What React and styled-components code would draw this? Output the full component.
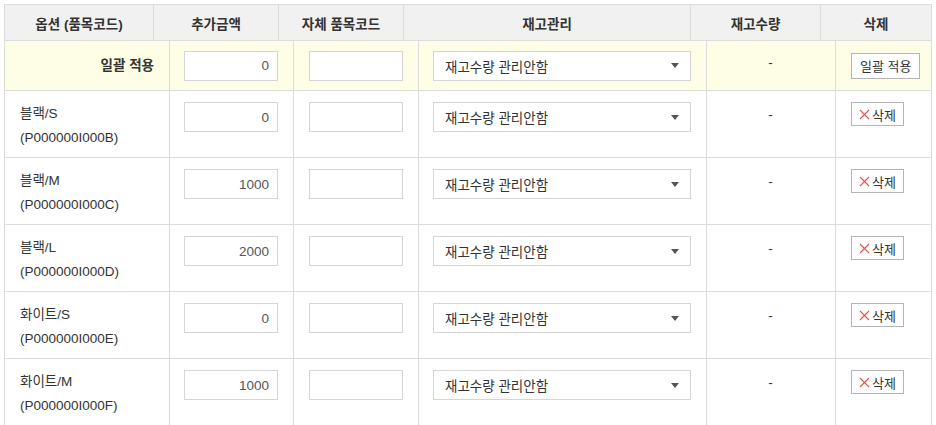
import React from "react";
import styled, { createGlobalStyle } from "styled-components";

const GlobalStyle = createGlobalStyle`
  html, body {
    margin: 0;
    padding: 0;
    background: #fff;
    overflow: hidden;
  }
  body {
    font-family: "Liberation Sans", "Noto Sans CJK KR", sans-serif;
    font-size: 13.5px;
    color: #333;
  }
`;

const headCols = "149px 125px 125px 287px 130px 112px";
const bodyCols = "165px 124px 125px 288px 129px 97px";

const Wrapper = styled.div`
  padding: 4px 0 0 4px;
  width: 928px;
  height: 421px;
  overflow: hidden;
`;

const HeadRow = styled.div`
  display: grid;
  grid-template-columns: ${headCols};
  height: 37px;
  background: #f1f1f1;
  border-top: 1px solid #dcdcdc;
  border-bottom: 1px solid #dcdcdc;
  box-sizing: border-box;
`;

const HeadCell = styled.div`
  display: flex;
  align-items: center;
  justify-content: center;
  border-left: 1px solid #dcdcdc;
  border-right: ${(p) => (p.$last ? "1px solid #dcdcdc" : "none")};
  font-weight: bold;
  color: #333;
`;

const Row = styled.div`
  display: grid;
  grid-template-columns: ${bodyCols};
  height: ${(p) => (p.$bulk ? "50px" : "67px")};
  background: ${(p) => (p.$bulk ? "#fefde6" : "#fff")};
  border-bottom: 1px solid #dcdcdc;
  box-sizing: border-box;
`;

const Cell = styled.div`
  display: flex;
  align-items: ${(p) => (p.$bulk ? "center" : "flex-start")};
  justify-content: ${(p) => p.$justify || "flex-start"};
  padding: ${(p) => (p.$bulk ? "0 15px 0 14px" : "11px 15px 0 14px")};
  border-left: 1px solid #dcdcdc;
  border-right: ${(p) => (p.$last ? "1px solid #dcdcdc" : "none")};
  box-sizing: border-box;
  min-width: 0;
`;

const BulkLabel = styled.div`
  width: 100%;
  text-align: right;
  font-weight: bold;
  color: #333;
  margin-top: -4px;
`;

const OptionLabel = styled.div`
  line-height: 24px;
  padding-left: 1px;
  color: #333;
`;

const TextInput = styled.div`
  width: 94px;
  height: 30px;
  box-sizing: border-box;
  border: 1px solid #d6d6d6;
  background: #fff;
  display: flex;
  align-items: center;
  justify-content: flex-end;
  padding-right: 8px;
  color: #555;
`;

const Select = styled.div`
  width: 100%;
  height: 30px;
  box-sizing: border-box;
  border: 1px solid #d6d6d6;
  background: #fff;
  display: flex;
  align-items: center;
  justify-content: space-between;
  padding: 0 11px 0 11px;
  color: #333;
`;

const Caret = styled.span`
  width: 0;
  height: 0;
  border-left: 4px solid transparent;
  border-right: 4px solid transparent;
  border-top: 5px solid #555;
`;

const Stock = styled.div`
  width: 100%;
  text-align: center;
  line-height: ${(p) => (p.$bulk ? "normal" : "25px")};
  margin-top: ${(p) => (p.$bulk ? "-6px" : "0")};
  color: #333;
`;

const Button = styled.div`
  height: ${(p) => (p.$bulk ? "26px" : "24px")};
  box-sizing: border-box;
  padding: 0 ${(p) => (p.$bulk ? "8px" : "7px")};
  border: 1px solid #b5b5b5;
  background: #fff;
  display: flex;
  align-items: center;
  gap: 2px;
  white-space: nowrap;
  flex-shrink: 0;
  font-size: 13px;
  color: #333;
  margin-left: 1px;
`;

const rows = [
  { name: "블랙/S", code: "P000000I000B", price: "0" },
  { name: "블랙/M", code: "P000000I000C", price: "1000" },
  { name: "블랙/L", code: "P000000I000D", price: "2000" },
  { name: "화이트/S", code: "P000000I000E", price: "0" },
  { name: "화이트/M", code: "P000000I000F", price: "1000" },
];

const headers = ["옵션 (품목코드)", "추가금액", "자체 품목코드", "재고관리", "재고수량", "삭제"];

function XIcon() {
  return (
    <svg width="11" height="11" viewBox="0 0 11 11">
      <path d="M1 1 L10 10 M10 1 L1 10" stroke="#e8504f" strokeWidth="1.1" fill="none" />
    </svg>
  );
}

function OptionRow({ bulk, item }) {
  return (
    <Row $bulk={bulk}>
      <Cell $bulk={bulk}>
        {bulk ? (
          <BulkLabel>일괄 적용</BulkLabel>
        ) : (
          <OptionLabel>
            {item.name}
            <br />({item.code})
          </OptionLabel>
        )}
      </Cell>
      <Cell $bulk={bulk} $justify="center">
        <TextInput>{bulk ? "0" : item.price}</TextInput>
      </Cell>
      <Cell $bulk={bulk} $justify="center">
        <TextInput />
      </Cell>
      <Cell $bulk={bulk}>
        <Select>
          <span>재고수량 관리안함</span>
          <Caret />
        </Select>
      </Cell>
      <Cell $bulk={bulk}>
        <Stock $bulk={bulk}>-</Stock>
      </Cell>
      <Cell $bulk={bulk} $last>
        {bulk ? (
          <Button $bulk>일괄 적용</Button>
        ) : (
          <Button>
            <XIcon />
            삭제
          </Button>
        )}
      </Cell>
    </Row>
  );
}

function EmptyRow() {
  return (
    <Row>
      {headers.map((h, i) => (
        <Cell key={h} $last={i === headers.length - 1} />
      ))}
    </Row>
  );
}

export default function App() {
  return (
    <>
      <GlobalStyle />
      <Wrapper>
        <HeadRow>
          {headers.map((h, i) => (
            <HeadCell key={h} $last={i === headers.length - 1}>
              {h}
            </HeadCell>
          ))}
        </HeadRow>
        <OptionRow bulk />
        {rows.map((r) => (
          <OptionRow key={r.code} item={r} />
        ))}
        <EmptyRow />
      </Wrapper>
    </>
  );
}
